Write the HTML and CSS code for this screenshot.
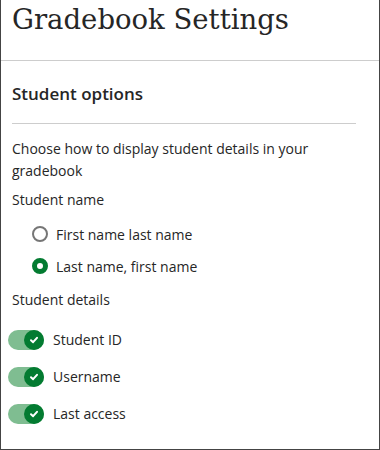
FILE: index.html
```html
<!DOCTYPE html>
<html lang="en">
<head>
    <meta charset="UTF-8">
    <meta name="viewport" content="width=device-width, initial-scale=1.0">
    <title>Gradebook Settings</title>
    <link rel="stylesheet" href="styles.css">
</head>
<body>
    <div class="panel">
        <header class="panel-header">
            <h1>Gradebook Settings</h1>
        </header>

        <section class="panel-body">
            <h2>Student options</h2>
            <p class="intro">Choose how to display student details in your gradebook</p>

            <div class="group" role="radiogroup">
                <div class="group-label">Student name</div>
                <div class="radios">
                    <label class="radio">
                        <input type="radio" name="nameFormat">
                        <span class="radio-mark"></span>
                        First name last name
                    </label>
                    <label class="radio">
                        <input type="radio" name="nameFormat" checked>
                        <span class="radio-mark"></span>
                        Last name, first name
                    </label>
                </div>
            </div>

            <div class="group">
                <div class="group-label">Student details</div>
                <div class="toggles">
                    <label class="toggle">
                        <input type="checkbox" checked>
                        <span class="toggle-track">
                            <span class="toggle-knob">
                                <svg viewBox="0 0 10 10" width="10" height="10"><path d="M2 5.2 L4.1 7.2 L8 2.8" fill="none" stroke="#fff" stroke-width="2" stroke-linecap="round" stroke-linejoin="round"/></svg>
                            </span>
                        </span>
                        Student ID
                    </label>
                    <label class="toggle">
                        <input type="checkbox" checked>
                        <span class="toggle-track">
                            <span class="toggle-knob">
                                <svg viewBox="0 0 10 10" width="10" height="10"><path d="M2 5.2 L4.1 7.2 L8 2.8" fill="none" stroke="#fff" stroke-width="2" stroke-linecap="round" stroke-linejoin="round"/></svg>
                            </span>
                        </span>
                        Username
                    </label>
                    <label class="toggle">
                        <input type="checkbox" checked>
                        <span class="toggle-track">
                            <span class="toggle-knob">
                                <svg viewBox="0 0 10 10" width="10" height="10"><path d="M2 5.2 L4.1 7.2 L8 2.8" fill="none" stroke="#fff" stroke-width="2" stroke-linecap="round" stroke-linejoin="round"/></svg>
                            </span>
                        </span>
                        Last access
                    </label>
                </div>
            </div>
        </section>
    </div>
</body>
</html>
```

FILE: styles.css
```css
/* General */
* {
    box-sizing: border-box;
}

body {
    margin: 0;
    font-family: 'Open Sans', sans-serif;
    color: #262626;
    background: #fff;
}

.panel {
    width: 380px;
    height: 450px;
    border: 1px solid #444;
    border-top: none;
    overflow: hidden;
}

/* Header */
.panel-header {
    height: 61px;
    border-bottom: 1px solid #cdcdcd;
    padding: 1px 11px 0;
}

.panel-header h1 {
    margin: 0;
    font-family: 'DejaVu Serif', serif;
    font-weight: normal;
    font-size: 27.5px;
    line-height: 36px;
    color: #262626;
}

/* Body */
.panel-body {
    padding: 0 23px 0 11px;
}

.panel-body h2 {
    margin: 0;
    padding: 20px 0 16px;
    font-size: 17px;
    font-weight: 600;
    line-height: 26px;
    border-bottom: 1px solid #cdcdcd;
}

.intro {
    margin: 0;
    padding-top: 14px;
    font-size: 14px;
    line-height: 22px;
}

.group-label {
    margin-top: 7px;
    font-size: 14px;
    line-height: 22px;
}

/* Radios */
.radios {
    margin-top: 7px;
    margin-bottom: 6px;
}

.radio {
    display: flex;
    align-items: center;
    gap: 8px;
    padding-left: 20px;
    height: 32px;
    font-size: 14px;
    cursor: pointer;
}

.radio input,
.toggle input {
    display: none;
}

.radio-mark {
    width: 16px;
    height: 16px;
    border-radius: 50%;
    border: 2px solid #767676;
}

.radio input:checked + .radio-mark {
    border: 5px solid #037b31;
}

/* Toggles */
.toggles {
    margin-top: 10px;
}

.toggle {
    display: flex;
    align-items: center;
    gap: 9px;
    margin-left: -4px;
    height: 37px;
    font-size: 14px;
    cursor: pointer;
}

.toggle-track {
    display: flex;
    justify-content: flex-end;
    width: 36px;
    height: 20px;
    border-radius: 10px;
    background: #7fbd91;
}

.toggle-knob {
    display: flex;
    align-items: center;
    justify-content: center;
    width: 20px;
    height: 20px;
    border-radius: 50%;
    background: #037b31;
}
```
